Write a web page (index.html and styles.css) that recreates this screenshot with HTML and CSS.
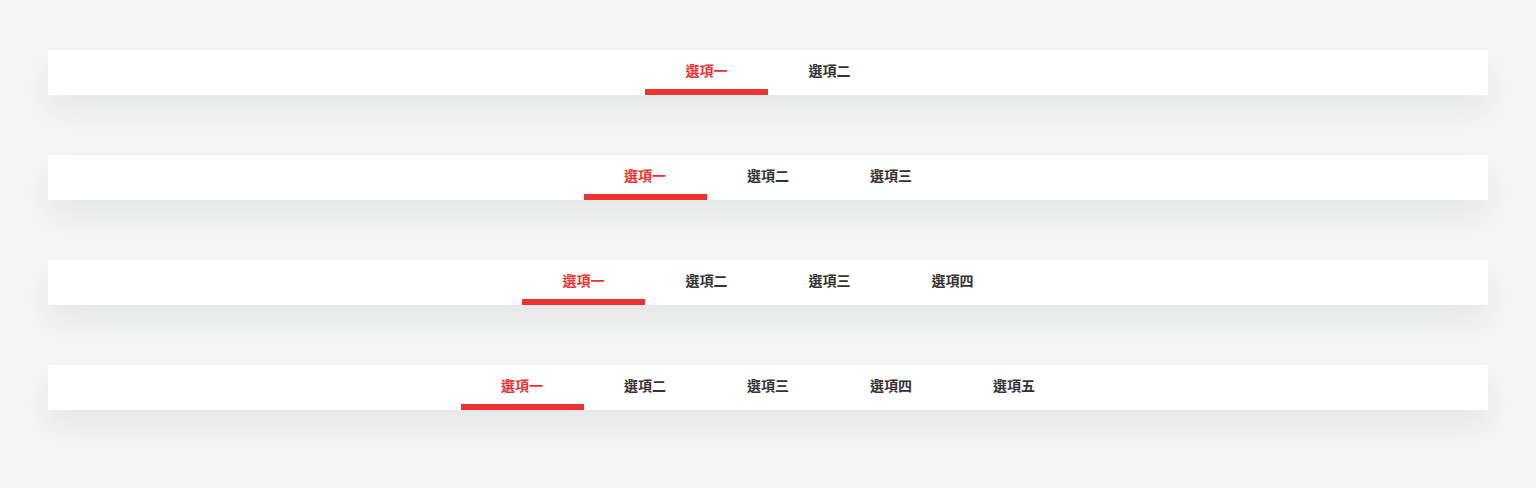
FILE: index.html
```html
<!DOCTYPE html>
<html lang="zh-Hant">
<head>
<meta charset="utf-8">
<link rel="stylesheet" href="styles.css">
</head>
<body>
<div class="page">
  <nav class="tabs">
    <a class="tab active">選項一</a>
    <a class="tab">選項二</a>
  </nav>
  <nav class="tabs">
    <a class="tab active">選項一</a>
    <a class="tab">選項二</a>
    <a class="tab">選項三</a>
  </nav>
  <nav class="tabs">
    <a class="tab active">選項一</a>
    <a class="tab">選項二</a>
    <a class="tab">選項三</a>
    <a class="tab">選項四</a>
  </nav>
  <nav class="tabs">
    <a class="tab active">選項一</a>
    <a class="tab">選項二</a>
    <a class="tab">選項三</a>
    <a class="tab">選項四</a>
    <a class="tab">選項五</a>
  </nav>
</div>
</body>
</html>
```
FILE: styles.css
```css
html, body {
  margin: 0;
  padding: 0;
  background: #f5f5f5;
}
.page {
  padding: 50px 48px;
  display: flex;
  flex-direction: column;
  gap: 60px;
  font-family: "Noto Sans CJK TC", "Noto Sans", sans-serif;
}
.tabs {
  height: 45px;
  background: #fff;
  display: flex;
  justify-content: center;
  box-shadow: 0 16px 30px rgba(30, 40, 60, 0.07);
}
.tab {
  width: 123px;
  box-sizing: border-box;
  display: flex;
  justify-content: center;
  padding-top: 10px;
  font-size: 14px;
  font-weight: 700;
  line-height: 20px;
  color: #333;
  border-bottom: 6px solid transparent;
}
.tab.active {
  color: #ee3131;
  border-bottom-color: #ee3131;
}
```
